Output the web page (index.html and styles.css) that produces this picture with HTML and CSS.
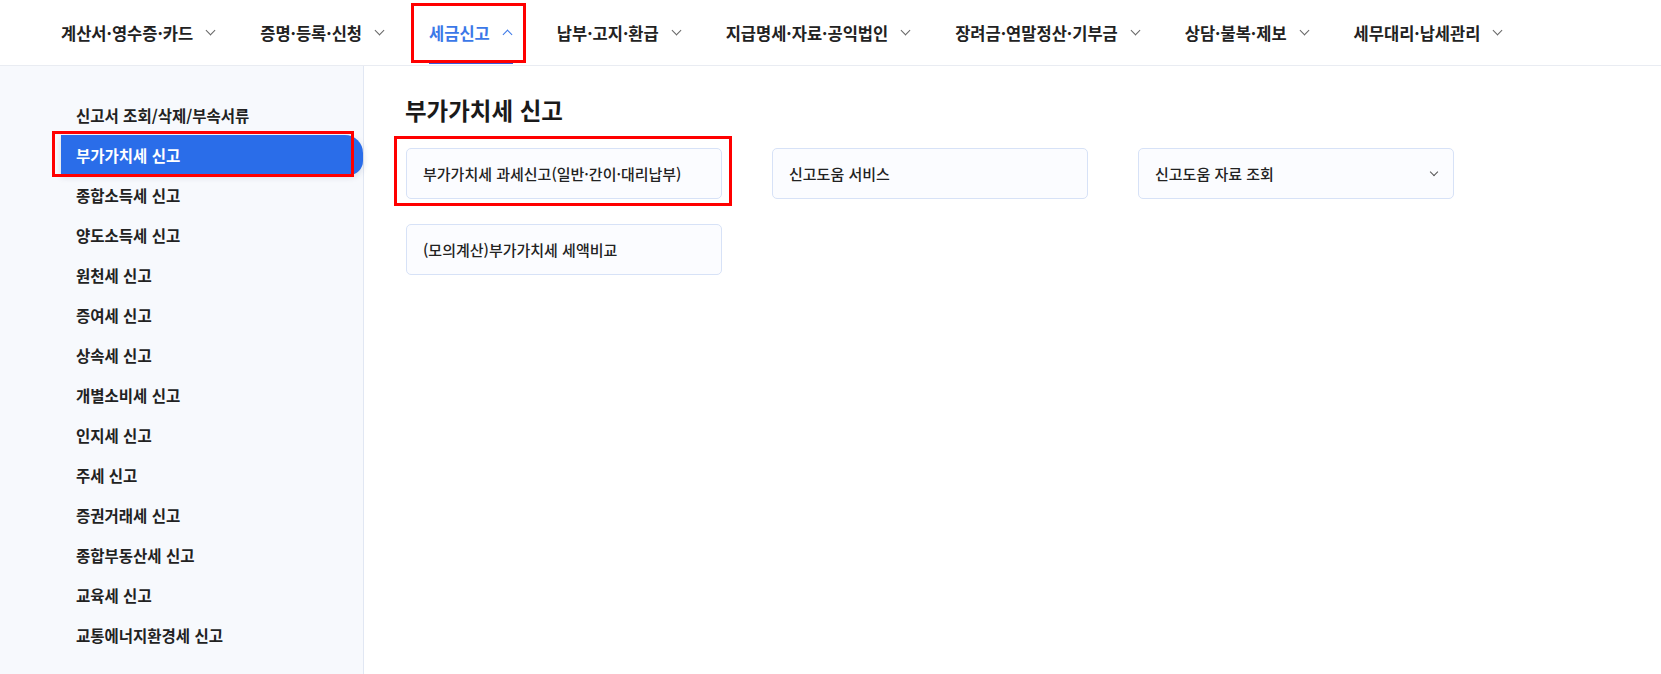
FILE: index.html
```html
<!DOCTYPE html>
<html lang="ko">
<head>
	<meta charset="utf-8">
	<title>세금신고 - 부가가치세 신고</title>
	<link rel="stylesheet" href="styles.css">
</head>
<body>
	<header class="topbar">
		<ul class="gnb">
			<li class="gnb-item">계산서·영수증·카드 <span class="caret"></span></li>
			<li class="gnb-item">증명·등록·신청 <span class="caret"></span></li>
			<li class="gnb-item active">세금신고 <span class="caret up"></span><span class="mark"></span></li>
			<li class="gnb-item">납부·고지·환급 <span class="caret"></span></li>
			<li class="gnb-item">지급명세·자료·공익법인 <span class="caret"></span></li>
			<li class="gnb-item">장려금·연말정산·기부금 <span class="caret"></span></li>
			<li class="gnb-item">상담·불복·제보 <span class="caret"></span></li>
			<li class="gnb-item">세무대리·납세관리 <span class="caret"></span></li>
		</ul>
	</header>
	<div class="wrap">
		<aside class="side">
			<ul class="lnb">
				<li class="lnb-item">신고서 조회/삭제/부속서류</li>
				<li class="lnb-item active">부가가치세 신고<span class="mark"></span></li>
				<li class="lnb-item">종합소득세 신고</li>
				<li class="lnb-item">양도소득세 신고</li>
				<li class="lnb-item">원천세 신고</li>
				<li class="lnb-item">증여세 신고</li>
				<li class="lnb-item">상속세 신고</li>
				<li class="lnb-item">개별소비세 신고</li>
				<li class="lnb-item">인지세 신고</li>
				<li class="lnb-item">주세 신고</li>
				<li class="lnb-item">증권거래세 신고</li>
				<li class="lnb-item">종합부동산세 신고</li>
				<li class="lnb-item">교육세 신고</li>
				<li class="lnb-item">교통에너지환경세 신고</li>
			</ul>
		</aside>
		<main class="content">
			<h2 class="title">부가가치세 신고</h2>
			<div class="menu-grid">
				<div class="menu-card">부가가치세 과세신고(일반·간이·대리납부)<span class="mark"></span></div>
				<div class="menu-card">신고도움 서비스</div>
				<div class="menu-card">신고도움 자료 조회 <span class="caret small"></span></div>
				<div class="menu-card">(모의계산)부가가치세 세액비교</div>
			</div>
		</main>
	</div>
</body>
</html>
```

FILE: styles.css
```css
html, body {
	margin: 0;
	padding: 0;
	height: 100%;
}
body {
	font-family: "Noto Sans CJK KR", "Noto Sans", sans-serif;
	color: #222;
	background: #fff;
	overflow: hidden;
}
ul {
	list-style: none;
	margin: 0;
	padding: 0;
}

/* top menu */
.topbar {
	height: 65px;
	border-bottom: 1px solid #e9ecf2;
}
.gnb {
	display: flex;
	height: 65px;
	padding-left: 61px;
	gap: 44px;
}
.gnb-item {
	position: relative;
	display: flex;
	align-items: center;
	gap: 12px;
	font-size: 16.5px;
	font-weight: 600;
	color: #222;
	white-space: nowrap;
	cursor: pointer;
}
.gnb-item.active {
	color: #3b78e8;
}
.gnb-item.active::after {
	content: "";
	position: absolute;
	left: 0;
	right: 0;
	bottom: 1px;
	height: 2px;
	background: #3b5bdb;
}
.caret {
	display: inline-block;
	width: 6px;
	height: 6px;
	border-right: 1.5px solid #666;
	border-bottom: 1.5px solid #666;
	transform: translateY(-2px) rotate(45deg);
	margin: 0 2px;
}
.caret.up {
	border-color: #3b78e8;
	transform: translateY(2px) rotate(-135deg);
}
.caret.small {
	width: 5px;
	height: 5px;
	border-width: 0 1px 1px 0;
	border-color: #555;
}

/* annotation boxes */
.mark {
	position: absolute;
	z-index: 2;
	border: 3px solid #ff0000;
	box-sizing: border-box;
	pointer-events: none;
}
.gnb-item .mark {
	left: -18px;
	right: -13px;
	top: 3px;
	bottom: 2px;
}

/* left menu */
.wrap {
	display: flex;
	height: calc(100% - 66px);
}
.side {
	width: 363px;
	flex-shrink: 0;
	background: #f7f9fd;
	border-right: 1px solid #e1e7f3;
	padding-top: 29px;
}
.lnb-item {
	position: relative;
	height: 40px;
	line-height: 40px;
	margin-left: 61px;
	padding-left: 15px;
	font-size: 15.5px;
	font-weight: 600;
	color: #222;
	cursor: pointer;
}
.lnb-item.active {
	background: #2a6de9;
	color: #fff;
	border-radius: 0 18px 14px 0;
	box-shadow: 0 2px 6px rgba(30, 50, 90, 0.15);
}
.lnb-item .mark {
	left: -9px;
	right: 9px;
	top: -4px;
	bottom: -2px;
}

/* content */
.content {
	flex: 1;
	padding: 29px 0 0 41px;
}
.title {
	margin: 0 0 23px;
	font-size: 23.5px;
	font-weight: 700;
	line-height: 30px;
	color: #1a1a1a;
}
.menu-grid {
	display: grid;
	grid-template-columns: repeat(3, 316px);
	grid-auto-rows: 51px;
	column-gap: 50px;
	row-gap: 25px;
	padding-left: 1px;
}
.menu-card {
	position: relative;
	display: flex;
	align-items: center;
	justify-content: space-between;
	padding: 0 14px 0 16px;
	border: 1px solid #d7e2f7;
	border-radius: 5px;
	background: #fbfcff;
	font-size: 15px;
	font-weight: 500;
	color: #222;
	cursor: pointer;
}
.menu-card .mark {
	left: -13px;
	right: -11px;
	top: -13px;
	bottom: -8px;
}
```
